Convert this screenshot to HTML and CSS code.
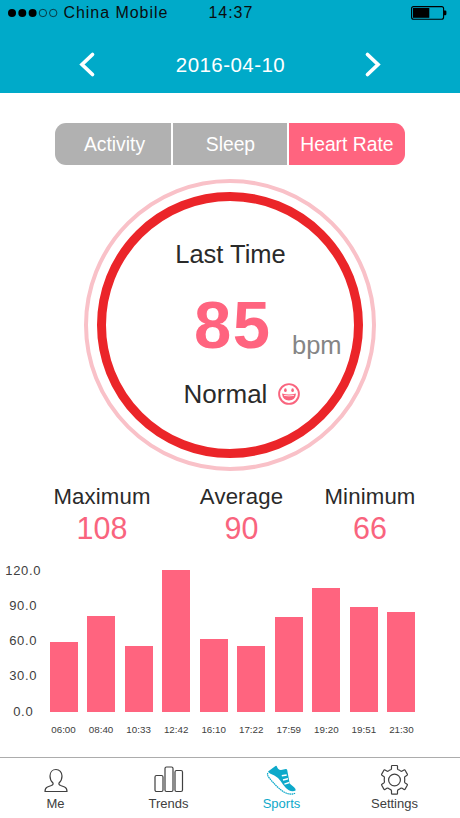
FILE: index.html
```html
<!DOCTYPE html>
<html lang="en">
<head>
<meta charset="utf-8">
<title>Heart Rate</title>
<link rel="stylesheet" href="styles.css">
</head>
<body>
<div class="app">
  <header class="header">
    <div class="status">
      <div class="carrier">
        <svg class="signal" width="50" height="10" viewBox="0 0 50 10">
          <circle cx="4" cy="5" r="4"/><circle cx="14.3" cy="5" r="4"/><circle cx="24.6" cy="5" r="4"/>
          <circle class="empty" cx="34.9" cy="5" r="3.7"/><circle class="empty" cx="45.2" cy="5" r="3.7"/>
        </svg>
        <span>China Mobile</span>
      </div>
      <span class="clock">14:37</span>
      <svg class="battery" width="36" height="14" viewBox="0 0 36 14">
        <rect x=".6" y=".6" width="32" height="12.6" rx="2" fill="none" stroke="#000" stroke-width="1.1"/>
        <rect x="2" y="2" width="16.3" height="9.8"/>
        <path d="M33 4.5h1.2q1.2 0 1.2 1.2v2.4q0 1.2-1.2 1.2H33z"/>
      </svg>
    </div>
    <nav class="datebar">
      <svg class="arrow" width="18" height="28" viewBox="0 0 18 28"><path d="M14.5 3.500 4 13.500l10.500 10"/></svg>
      <span class="date">2016-04-10</span>
      <svg class="arrow" width="18" height="28" viewBox="0 0 18 28"><path d="M3.500 3.500 14 13.500 3.500 23.500"/></svg>
    </nav>
  </header>

  <div class="tabs">
    <div class="tab">Activity</div>
    <div class="tab">Sleep</div>
    <div class="tab active">Heart Rate</div>
  </div>

  <section class="halo">
    <div class="ring">
      <div class="caption">Last Time</div>
      <div class="reading"><span class="value">85</span><span class="unit">bpm</span></div>
      <div class="state">
        <span>Normal</span>
        <svg width="22" height="22" viewBox="0 0 22 22">
          <circle cx="11" cy="11" r="9.900" fill="none" stroke="#f9647e" stroke-width="1.900"/>
          <ellipse cx="7.400" cy="7.200" rx="1.300" ry="1.900"/><ellipse cx="14.600" cy="7.200" rx="1.300" ry="1.900"/>
          <path d="M4 10.600q7 1.800 14 0-.7 6.900-7 6.900T4 10.600z"/>
          <path d="M6 12.400q5 1 10 0" fill="none" stroke="#fff" stroke-width=".8"/>
        </svg>
      </div>
    </div>
  </section>

  <section class="stats">
    <div class="stat"><div class="name">Maximum</div><div class="num">108</div></div>
    <div class="stat"><div class="name">Average</div><div class="num">90</div></div>
    <div class="stat"><div class="name">Minimum</div><div class="num">66</div></div>
  </section>

  <section class="chart">
    <div class="axis"><span>120.0</span><span>90.0</span><span>60.0</span><span>30.0</span><span>0.0</span></div>
    <div class="plot">
      <div class="col"><div class="bar" style="height:69.700px"></div><span>06:00</span></div>
      <div class="col"><div class="bar" style="height:95.700px"></div><span>08:40</span></div>
      <div class="col"><div class="bar" style="height:65.700px"></div><span>10:33</span></div>
      <div class="col"><div class="bar" style="height:141.300px"></div><span>12:42</span></div>
      <div class="col"><div class="bar" style="height:72.700px"></div><span>16:10</span></div>
      <div class="col"><div class="bar" style="height:65.200px"></div><span>17:22</span></div>
      <div class="col"><div class="bar" style="height:95px"></div><span>17:59</span></div>
      <div class="col"><div class="bar" style="height:123.500px"></div><span>19:20</span></div>
      <div class="col"><div class="bar" style="height:105px"></div><span>19:51</span></div>
      <div class="col"><div class="bar" style="height:99.200px"></div><span>21:30</span></div>
    </div>
  </section>

  <nav class="bottom">
    <div class="item">
      <svg width="32" height="32" viewBox="0 0 32 32"><path d="M16 5.500c-3.500 0-6 2.600-6 6.500 0 3 1.100 5.400 3 7 .4 1.200-.4 2-1.600 2.500l-4 1.500C5.600 23.700 5 25 5 27.500h22c0-2.500-.6-3.800-2.400-4.500l-4-1.500c-1.200-.5-2-1.300-1.600-2.500 1.900-1.600 3-4 3-7 0-3.900-2.500-6.500-6-6.500z"/></svg>
      <span>Me</span>
    </div>
    <div class="item">
      <svg width="32" height="32" viewBox="0 0 32 32"><rect x="2" y="11.500" width="8" height="16" rx="1.500"/><rect x="12" y="3" width="8" height="24.500" rx="1.500"/><rect x="22" y="6.500" width="7.500" height="21" rx="1.500"/></svg>
      <span>Trends</span>
    </div>
    <div class="item current">
      <svg width="32" height="32" viewBox="0 0 32 32">
        <path class="fill" d="M2 7.600 9.500 2q1-.7 1.500.8.900 3.300 4 3.100l4.800-.8q1.200-.1 1.400 1l2.300 12.500q.2 1 1 1.600l3.600 3q2 1.800 1.500 3.400-3.300 1.400-6.800-.4-3-1.700-5.800-5.700-2.500-3.900-5-6.500Q8.500 10.900 4.500 9.700 2.600 9 2 7.600z"/>
        <path d="M1.800 9c-.7 1.700 0 3.200 1.500 5 4.500 5.500 9.200 10.700 14.700 14 4 2.400 8.500 2.600 11.300 1.100" stroke-width="1.200" stroke-dasharray="1.600 .5"/>
        <path class="lace" d="m15.800 11.800 4.900-.9M17 16l5-1.200M18.400 20.100l5-1.600"/>
      </svg>
      <span>Sports</span>
    </div>
    <div class="item">
      <svg width="32" height="32" viewBox="0 0 32 32">
        <circle cx="15.500" cy="16" r="5.900"/>
        <path d="M13.200 1.500h4.600q.7 0 .7.700v2.200q0 1 .9 1.400 1.300.5 2.300 1.300.7.500 1.500 0l1.800-1.100q.7-.4 1.100.3l2.200 3.800q.4.700-.2 1.100l-1.900 1.200q-.8.500-.6 1.400.3 1.900 0 3.700-.2.900.6 1.500l1.900 1.200q.6.400.2 1.100l-2.200 3.800q-.4.700-1.100.3l-1.800-1.100q-.8-.5-1.500 0-1 .8-2.300 1.300-.9.400-.9 1.400v2.500q0 .7-.7.700h-4.600q-.7 0-.7-.7V27q0-1-.9-1.400-1.300-.5-2.300-1.300-.7-.5-1.500 0L6 25.400q-.7.400-1.100-.3l-2.200-3.800q-.4-.7.200-1.100L4.800 19q.8-.6.6-1.500-.3-1.800 0-3.700.2-.9-.6-1.400l-1.900-1.200q-.6-.4-.2-1.100l2.200-3.800Q5.300 5.600 6 6l1.800 1.100q.8.500 1.500 0 1-.8 2.300-1.300.9-.4.900-1.400V2.200q0-.7.700-.7z"/>
      </svg>
      <span>Settings</span>
    </div>
  </nav>
</div>
</body>
</html>
```
FILE: styles.css
```css
* { box-sizing: border-box; }
body { margin: 0; background: #fff; font-family: "Liberation Sans", Arial, sans-serif; color: #2a2a2a; }
svg { display: block; flex: none; }
.app { width: 460px; height: 818px; display: flex; flex-direction: column; overflow: hidden; }

.header { flex: none; height: 93px; background: #00aac9; }
.status { display: grid; grid-template-columns: 208px 1fr auto; height: 26px; padding: 0 13px 0 8px; align-items: center; color: #0b0d0e; font-size: 16px; letter-spacing: 0.95px; line-height: 26px; }
.carrier { display: flex; align-items: center; gap: 5.500px; }
.clock { margin-left: -7.500px; }
.signal .empty { fill: none; stroke: #0b0d0e; stroke-width: 0.7; }
.datebar { height: 77px; margin: 0 78px; display: flex; justify-content: space-between; align-items: center; }
.datebar .arrow { fill: none; stroke: #fff; stroke-width: 3.7; stroke-linecap: round; stroke-linejoin: miter; }
.date { color: #fff; font-size: 20.5px; letter-spacing: 0.45px; padding-left: 1px; }

.tabs { flex: none; display: grid; grid-template-columns: 116px 114.500px 116px; gap: 1.700px; width: 350px; height: 42px; margin: 30px 0 0 55px; border-radius: 11px; overflow: hidden; }
.tab { background: #b1b1b1; color: #fff; font-size: 19.300px; line-height: 43px; text-align: center; padding-left: 3px; }
.tab:nth-child(2) { padding-left: 1px; }
.tab.active { background: #ff647f; padding-left: 0; }

.halo { flex: none; width: 292px; height: 292px; margin: 14px auto 0; border: 4px solid #f9c1c8; border-radius: 50%; display: flex; justify-content: center; align-items: center; }
.ring { width: 266px; height: 266px; border: 9px solid #eb2529; border-radius: 50%; display: flex; flex-direction: column; align-items: center; }
.caption { margin-top: 37px; font-size: 25.500px; line-height: 32px; padding-left: 1px; }
.reading { align-self: stretch; height: 84px; margin-top: 13px; padding-left: 88px; display: flex; align-items: baseline; }
.value { width: 98px; color: #ff647f; font-size: 67px; font-weight: bold; line-height: 84px; letter-spacing: 1.500px; }
.unit { color: #858585; font-size: 25.500px; line-height: 30px; position: relative; top: 6px; }
.state { display: flex; align-items: center; gap: 11px; margin-top: 12px; padding-left: 24px; font-size: 26px; line-height: 30px; }
.state svg { fill: #f9647e; }

.stats { flex: none; display: grid; grid-template-columns: 141px 138px 119px; margin: 13px 0 0 31.500px; text-align: center; }
.name { font-size: 22.200px; line-height: 26px; letter-spacing: 0.150px; }
.num { color: #f9647e; font-size: 30.500px; line-height: 37px; }

.chart { flex: none; display: flex; height: 180px; margin-top: 16.500px; }
.axis { width: 49.500px; display: flex; flex-direction: column; align-items: center; padding-right: 3px; color: #404040; font-size: 13px; letter-spacing: 0.700px; }
.axis span { height: 35.300px; line-height: 14px; flex: none; }
.plot { width: 366px; display: flex; justify-content: space-between; align-items: flex-end; padding-bottom: 7px; }
.col { width: 28px; display: flex; flex-direction: column; align-items: center; }
.bar { width: 28px; background: #ff647f; }
.col span { margin-top: 11px; font-size: 9.800px; line-height: 14px; color: #404040; }

.bottom { flex: none; display: grid; grid-template-columns: repeat(4, 113px); height: 61px; margin: auto 0 0; padding: 0; border-top: 1px solid #acacac; }
.item { display: flex; flex-direction: column; align-items: center; padding: 6px 2px 0 0; font-size: 13px; line-height: 15px; color: #404040; }
.item svg { fill: none; stroke: #404040; stroke-width: 1.200; stroke-linejoin: round; }
.item.current { color: #0da9ca; }
.item.current svg { stroke: #0da9ca; }
.item .fill { fill: #0da9ca; stroke: none; }
.item .lace { stroke: #fff; stroke-width: 1.500; }
```
